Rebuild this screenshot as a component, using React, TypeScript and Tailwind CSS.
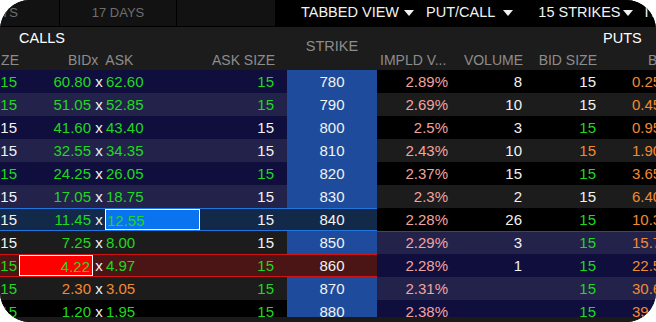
import React from 'react';

// colour palette used by the option chain
const G = 'text-[#1fd81f]';
const W = 'text-[#f2f2f2]';
const O = 'text-[#f38a30]';
const P = 'text-[#f3a29e]';

const NAVY = 'bg-[#0f0e3c]';
const NAVY2 = 'bg-[#23224b]';
const GRAY = 'bg-[#1c1c1c]';
const BLACK = 'bg-black';

type Row = {
  strike: number;
  bs: string; bsC: string;
  bid: string; ask: string; pc: string;
  as: string; asC: string;
  iv: string; vol: string;
  pbs: string; pbsC: string; pb: string;
  callBg: string; putBg: string;
  hl?: 'blue' | 'red';
  itmLine?: boolean;
};

const rows: Row[] = [
  { strike: 780, bs: '15', bsC: G, bid: '60.80', ask: '62.60', pc: G, as: '15', asC: G, iv: '2.89%', vol: '8', pbs: '15', pbsC: W, pb: '0.25', callBg: NAVY, putBg: BLACK },
  { strike: 790, bs: '15', bsC: G, bid: '51.05', ask: '52.85', pc: G, as: '15', asC: G, iv: '2.69%', vol: '10', pbs: '15', pbsC: W, pb: '0.45', callBg: NAVY2, putBg: GRAY },
  { strike: 800, bs: '15', bsC: W, bid: '41.60', ask: '43.40', pc: G, as: '15', asC: W, iv: '2.5%', vol: '3', pbs: '15', pbsC: G, pb: '0.95', callBg: NAVY, putBg: BLACK },
  { strike: 810, bs: '15', bsC: W, bid: '32.55', ask: '34.35', pc: G, as: '15', asC: W, iv: '2.43%', vol: '10', pbs: '15', pbsC: O, pb: '1.90', callBg: NAVY2, putBg: GRAY },
  { strike: 820, bs: '15', bsC: G, bid: '24.25', ask: '26.05', pc: G, as: '15', asC: G, iv: '2.37%', vol: '15', pbs: '15', pbsC: G, pb: '3.65', callBg: NAVY, putBg: BLACK },
  { strike: 830, bs: '15', bsC: W, bid: '17.05', ask: '18.75', pc: G, as: '15', asC: W, iv: '2.3%', vol: '2', pbs: '15', pbsC: W, pb: '6.40', callBg: NAVY2, putBg: GRAY },
  { strike: 840, bs: '15', bsC: W, bid: '11.45', ask: '12.55', pc: G, as: '15', asC: W, iv: '2.28%', vol: '26', pbs: '15', pbsC: G, pb: '10.35', callBg: 'bg-[#13294a]', putBg: BLACK, hl: 'blue' },
  { strike: 850, bs: '15', bsC: W, bid: '7.25', ask: '8.00', pc: G, as: '15', asC: W, iv: '2.29%', vol: '3', pbs: '15', pbsC: G, pb: '15.70', callBg: GRAY, putBg: NAVY2, itmLine: true },
  { strike: 860, bs: '15', bsC: G, bid: '4.22', ask: '4.97', pc: G, as: '15', asC: G, iv: '2.28%', vol: '1', pbs: '15', pbsC: G, pb: '22.55', callBg: 'bg-[#4b1515]', putBg: NAVY, hl: 'red' },
  { strike: 870, bs: '15', bsC: G, bid: '2.30', ask: '3.05', pc: O, as: '15', asC: G, iv: '2.31%', vol: '', pbs: '15', pbsC: G, pb: '30.60', callBg: GRAY, putBg: NAVY2 },
  { strike: 880, bs: '15', bsC: G, bid: '1.20', ask: '1.95', pc: G, as: '15', asC: G, iv: '2.38%', vol: '', pbs: '15', pbsC: G, pb: '39.45', callBg: BLACK, putBg: NAVY },
];

const Caret = () => (
  <svg width="10" height="7" viewBox="0 0 10 7" className="shrink-0">
    <polygon points="0,0 10,0 5,6" fill="#f2f2f2" />
  </svg>
);

const ChainRow = ({ r }: { r: Row }) => {
  const line =
    r.hl === 'blue'
      ? 'shadow-[inset_0_1px_0_#2374dc,inset_0_-1px_0_#2374dc]'
      : r.hl === 'red'
      ? 'shadow-[inset_0_1px_0_#d01414,inset_0_-1px_0_#d01414]'
      : '';
  const strikeBg = r.hl ? r.callBg : 'bg-[#1e4b9b]';

  return (
    <div className="flex h-[23px] shrink-0 text-[15px] leading-[23px]">
      {/* calls */}
      <div className={`flex w-[287px] shrink-0 ${r.callBg} ${line}`}>
        <div className={`w-[19px] shrink-0 pr-[2px] text-right ${r.bsC}`}>{r.bs}</div>
        <div className="w-[74px] shrink-0 py-px">
          <div
            className={`h-full pr-[2px] text-right leading-[21px] ${r.pc} ${
              r.hl === 'red' ? 'bg-[#ff0000] border border-white pr-[1px] leading-[19px]' : ''
            }`}
          >
            {r.bid}
          </div>
        </div>
        <div className={`w-[12px] shrink-0 text-center ${W}`}>x</div>
        <div className="w-[95px] shrink-0 py-px">
          <div
            className={`h-full pl-px leading-[21px] ${r.pc} ${
              r.hl === 'blue' ? 'bg-[#0a74f0] border border-white pl-[1px] leading-[19px]' : ''
            }`}
          >
            {r.ask}
          </div>
        </div>
        <div className={`w-[87px] shrink-0 pr-[13px] text-right ${r.asC}`}>{r.as}</div>
      </div>
      {/* strike */}
      <div className={`w-[90px] shrink-0 text-center ${W} ${strikeBg} ${line}`}>{r.strike}</div>
      {/* puts */}
      <div
        className={`flex w-[279px] shrink-0 ${r.putBg} ${
          r.itmLine ? 'shadow-[inset_0_1px_0_#3b3ba0]' : ''
        }`}
      >
        <div className={`w-[81px] shrink-0 pr-[10px] text-right ${P}`}>{r.iv}</div>
        <div className={`w-[74px] shrink-0 pr-[10px] text-right ${W}`}>{r.vol}</div>
        <div className={`w-[74px] shrink-0 pr-[10px] text-right ${r.pbsC}`}>{r.pbs}</div>
        <div className={`w-[50px] shrink-0 whitespace-nowrap pl-[26px] ${O}`}>{r.pb}</div>
      </div>
    </div>
  );
};

const App: React.FC = () => {
  return (
    <div className="min-h-screen bg-white font-['Liberation_Sans',Arial,sans-serif]">
      <div className="flex h-[322px] w-[656px] flex-col overflow-hidden rounded-[30px] bg-black">
        {/* top bar */}
        <div className="flex h-[27px] shrink-0 border-b border-black">
          <div className="flex w-[275px] shrink-0 bg-[#121212] text-[13px] text-[#6e6e6e]">
            <div className="flex w-[60px] shrink-0 items-center justify-end overflow-hidden border-r border-black pr-[41px] whitespace-nowrap">
              3 DAYS
            </div>
            <div className="flex w-[117px] shrink-0 items-center justify-center border-r border-black">17 DAYS</div>
            <div className="flex-1" />
          </div>
          <div className="flex flex-1 items-center whitespace-nowrap bg-black pl-[26px] text-[14.5px] text-[#f2f2f2]">
            <span>TABBED VIEW</span>
            <span className="ml-[5px]"><Caret /></span>
            <span className="ml-[12px]">PUT/CALL</span>
            <span className="ml-[8px]"><Caret /></span>
            <span className="ml-[25px]">15 STRIKES</span>
            <span className="ml-[2px]"><Caret /></span>
            <span className="ml-[12px]">ITM</span>
          </div>
        </div>

        {/* column header */}
        <div className="flex h-[43px] shrink-0 bg-[#1c1c1c] text-[14px] text-[#8c8c8c]">
          <div className="flex w-[287px] shrink-0 flex-col">
            <div className="flex h-[23px] items-center pl-[19px] text-[14.5px] text-white">CALLS</div>
            <div className="flex h-[20px] items-center whitespace-nowrap">
              <span className="w-[19px] shrink-0 overflow-hidden text-right">ZE</span>
              <span className="ml-[49px]">BIDx&nbsp; ASK</span>
              <span className="ml-auto pr-[12px]">ASK SIZE</span>
            </div>
          </div>
          <div className="flex w-[90px] shrink-0 items-center justify-center pb-[3px] text-[14.5px]">STRIKE</div>
          <div className="flex w-[279px] shrink-0 flex-col">
            <div className="flex h-[23px] items-center pl-[226px] text-[14.5px] text-white">PUTS</div>
            <div className="flex h-[20px] items-center whitespace-nowrap">
              <span className="w-[81px] shrink-0 pl-[3px]">IMPLD V...</span>
              <span className="w-[74px] shrink-0 pr-[9px] text-right">VOLUME</span>
              <span className="w-[74px] shrink-0 pr-[9px] text-right">BID SIZE</span>
              <span className="pl-[42px]">BID</span>
            </div>
          </div>
        </div>

        {/* chain */}
        <div className="flex h-[247px] shrink-0 flex-col overflow-hidden">
          {rows.map((r) => (
            <ChainRow key={r.strike} r={r} />
          ))}
        </div>
        <div className="h-[5px] shrink-0 bg-[#1a1a1a]" />
      </div>
    </div>
  );
};

export default App;
